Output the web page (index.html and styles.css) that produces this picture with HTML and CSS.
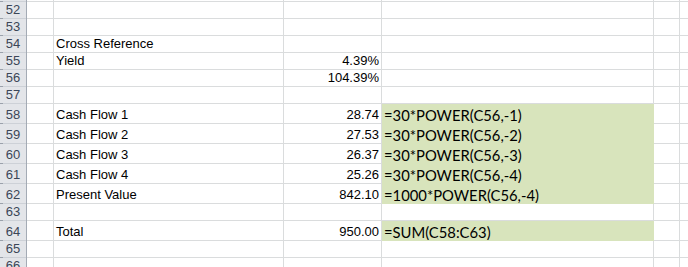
FILE: index.html
```html
<!DOCTYPE html>
<html>
<head>
    <title>Bond Cash Flows</title>
    <link rel="stylesheet" href="styles.css">
</head>
<body>
    <div class="sheet">
        <div class="row stub"><div class="hdr"></div><div class="c"></div><div class="c"></div><div class="c"></div><div class="c"></div><div class="c"></div><div class="c last"></div></div>
        <div class="row"><div class="hdr">52</div><div class="c"></div><div class="c"></div><div class="c"></div><div class="c"></div><div class="c"></div><div class="c last"></div></div>
        <div class="row"><div class="hdr">53</div><div class="c"></div><div class="c"></div><div class="c"></div><div class="c"></div><div class="c"></div><div class="c last"></div></div>
        <div class="row"><div class="hdr">54</div><div class="c"></div><div class="c txt">Cross Reference</div><div class="c"></div><div class="c"></div><div class="c"></div><div class="c last"></div></div>
        <div class="row"><div class="hdr">55</div><div class="c"></div><div class="c txt">Yield</div><div class="c num">4.39%</div><div class="c"></div><div class="c"></div><div class="c last"></div></div>
        <div class="row"><div class="hdr">56</div><div class="c"></div><div class="c"></div><div class="c num">104.39%</div><div class="c"></div><div class="c"></div><div class="c last"></div></div>
        <div class="row"><div class="hdr">57</div><div class="c"></div><div class="c"></div><div class="c"></div><div class="c"></div><div class="c"></div><div class="c last"></div></div>
        <div class="row tall"><div class="hdr">58</div><div class="c"></div><div class="c txt">Cash Flow 1</div><div class="c num">28.74</div><div class="c fx">=30*POWER(C56,-1)</div><div class="c"></div><div class="c last"></div></div>
        <div class="row tall"><div class="hdr">59</div><div class="c"></div><div class="c txt">Cash Flow 2</div><div class="c num">27.53</div><div class="c fx">=30*POWER(C56,-2)</div><div class="c"></div><div class="c last"></div></div>
        <div class="row tall"><div class="hdr">60</div><div class="c"></div><div class="c txt">Cash Flow 3</div><div class="c num">26.37</div><div class="c fx">=30*POWER(C56,-3)</div><div class="c"></div><div class="c last"></div></div>
        <div class="row tall"><div class="hdr">61</div><div class="c"></div><div class="c txt">Cash Flow 4</div><div class="c num">25.26</div><div class="c fx">=30*POWER(C56,-4)</div><div class="c"></div><div class="c last"></div></div>
        <div class="row tall"><div class="hdr">62</div><div class="c"></div><div class="c txt">Present Value</div><div class="c num">842.10</div><div class="c fx">=1000*POWER(C56,-4)</div><div class="c"></div><div class="c last"></div></div>
        <div class="row"><div class="hdr">63</div><div class="c"></div><div class="c"></div><div class="c"></div><div class="c"></div><div class="c"></div><div class="c last"></div></div>
        <div class="row tall"><div class="hdr">64</div><div class="c"></div><div class="c txt">Total</div><div class="c num">950.00</div><div class="c fx">=SUM(C58:C63)</div><div class="c"></div><div class="c last"></div></div>
        <div class="row"><div class="hdr">65</div><div class="c"></div><div class="c"></div><div class="c"></div><div class="c"></div><div class="c"></div><div class="c last"></div></div>
        <div class="row"><div class="hdr">66</div><div class="c"></div><div class="c"></div><div class="c"></div><div class="c"></div><div class="c"></div><div class="c last"></div></div>
    </div>
</body>
</html>
```

FILE: styles.css
```css
body {
    margin: 0;
    background: #fff;
    font-family: "Liberation Sans", Arial, sans-serif;
    font-size: 13px;
    color: #000;
    overflow: hidden;
}
.sheet {
    width: 688px;
}
.row {
    display: grid;
    grid-template-columns: 27px 27px 230px 98px 272px 26px 1fr;
    height: 17px;
}
.row.tall {
    height: 20px;
}
.row.stub {
    height: 2px;
}
.c, .hdr {
    box-sizing: border-box;
    border-right: 1px solid #dadcdd;
    border-bottom: 1px solid #dadcdd;
    display: flex;
    align-items: flex-end;
    line-height: 16px;
    white-space: nowrap;
    overflow: hidden;
}
.c.last {
    border-right: none;
}
.hdr {
    justify-content: center;
    color: #3b4657;
    border-right-color: #a4abb5;
    border-bottom: none;
    background:
        linear-gradient(#9aa1ab, #9aa1ab) left bottom / 3px 1px no-repeat,
        linear-gradient(#cdd1d7, #cdd1d7) left bottom / 100% 1px no-repeat,
        #e3e5e9;
    padding-bottom: 1px;
}
.txt {
    padding-left: 2px;
}
.num {
    justify-content: flex-end;
    padding-right: 2px;
}
.fx {
    font-family: Lato, "Open Sans", sans-serif;
    font-size: 14.8px;
    padding-left: 2px;
    background: #d8e4bc;
    border-color: #d8e4bc;
}
```
